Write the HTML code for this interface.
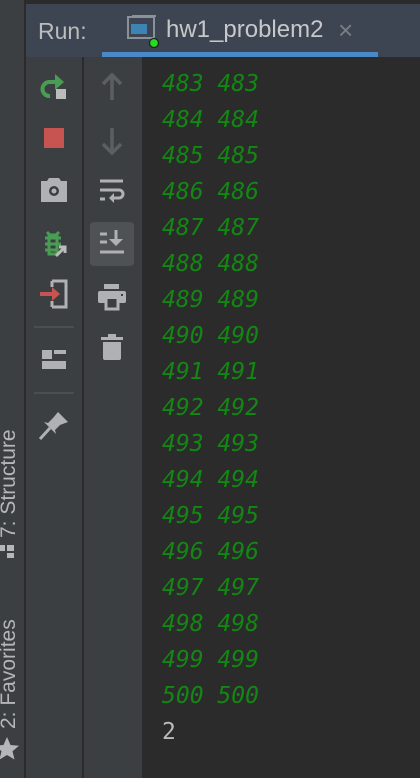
<!DOCTYPE html>
<html><head><style>
*{margin:0;padding:0;box-sizing:border-box}
body{width:420px;height:778px;overflow:hidden;background:#2b2b2b;position:relative;font-family:"Liberation Sans",sans-serif}
.a{position:absolute}
.out{position:absolute;left:162px;font-family:"DejaVu Sans Mono","Liberation Mono",monospace;font-style:italic;font-size:23px;color:#138713;line-height:36px;letter-spacing:0px}
.vt{position:absolute;color:#b4b6b8;font-size:21px;white-space:nowrap;transform-origin:0 0;transform:rotate(-90deg)}
</style></head><body>
<div class="a" style="left:0;top:0;width:24px;height:778px;background:#3c3f41"></div>
<div class="a" style="left:24px;top:0;width:2px;height:778px;background:#2b2b2b"></div>
<div class="a" style="left:26px;top:0;width:394px;height:4px;background:#2b2b2b"></div>
<div class="a" style="left:26px;top:4px;width:394px;height:53px;background:#3d4553"></div>
<div class="a" style="left:102px;top:52px;width:276px;height:5px;background:#4a88c7"></div>
<div class="a" style="left:38px;top:18px;font-size:23px;color:#bbbbbb">Run:</div>
<svg class="a" style="left:126px;top:14px" width="34" height="34"><rect x="2" y="3" width="26" height="21" fill="none" stroke="#8a9199" stroke-width="2"/><rect x="6" y="1" width="24" height="2" fill="#8a9199"/><rect x="5" y="10" width="16" height="10" fill="#3d84b4"/><circle cx="28" cy="29" r="4.5" fill="#22dd22" stroke="#222" stroke-width="1.3"/></svg>
<div class="a" style="left:166px;top:16px;font-size:24px;color:#c8c8c8">hw1_problem2</div>
<div class="a" style="left:338px;top:17px;font-size:26px;color:#7a7e83;line-height:26px">×</div>
<div class="a" style="left:26px;top:57px;width:56px;height:721px;background:#3c3f41"></div>
<div class="a" style="left:82px;top:57px;width:2px;height:721px;background:#2b2b2b"></div>
<div class="a" style="left:84px;top:57px;width:58px;height:721px;background:#3c3f41"></div>
<svg class="a" style="left:40px;top:70px" width="30" height="32"><path d="M16 12 H9 A7 7 0 0 0 10 26" fill="none" stroke="#499c54" stroke-width="4"/><path d="M15 4 L24 12 L15 20Z" fill="#499c54"/><rect x="16" y="19" width="10" height="10" fill="#bbbbbb"/></svg>
<div class="a" style="left:44px;top:128px;width:20px;height:20px;background:#c75450"></div>
<svg class="a" style="left:40px;top:178px" width="28" height="26"><path d="M9 0h10l2 3h6v21H1V3h6z" fill="#afb1b3"/><circle cx="14" cy="13" r="5" fill="#3c3f41"/><circle cx="14" cy="13" r="2.5" fill="#afb1b3"/></svg>
<svg class="a" style="left:41px;top:228px" width="30" height="30"><path d="M6 4l3 3h6l3-3M4 10h16M4 16h16M4 22h12M8 8h8v18H8z" stroke="#499c54" stroke-width="3" fill="none"/><path d="M15 28l9-9M18 19h6v6" stroke="#bbbbbb" stroke-width="3" fill="none"/></svg>
<svg class="a" style="left:38px;top:278px" width="32" height="32"><path d="M14 3h14v26H14M14 3v6M14 23v6" stroke="#afb1b3" stroke-width="3" fill="none"/><path d="M2 16h14" stroke="#c75450" stroke-width="4"/><path d="M14 9l8 7-8 7z" fill="#c75450"/></svg>
<div class="a" style="left:34px;top:326px;width:40px;height:2px;background:#4b4e50"></div>
<svg class="a" style="left:42px;top:350px" width="26" height="22"><rect x="0" y="0" width="10" height="9" fill="#afb1b3"/><rect x="12" y="0" width="12" height="4" fill="#afb1b3"/><rect x="0" y="11" width="24" height="8" fill="#afb1b3"/></svg>
<div class="a" style="left:34px;top:392px;width:40px;height:2px;background:#4b4e50"></div>
<svg class="a" style="left:38px;top:410px" width="32" height="32"><path d="M20 2l10 10-8 3-5 5 1 4-12-12 4 1 5-5z" fill="#afb1b3"/><path d="M12 18L2 29" stroke="#afb1b3" stroke-width="3"/></svg>
<svg class="a" style="left:100px;top:72px" width="24" height="30"><path d="M12 28V3M3 12l9-9 9 9" stroke="#5c5f61" stroke-width="3.5" fill="none"/></svg>
<svg class="a" style="left:100px;top:126px" width="24" height="30"><path d="M12 2v25M3 18l9 9 9-9" stroke="#5c5f61" stroke-width="3.5" fill="none"/></svg>
<svg class="a" style="left:99px;top:179px" width="26" height="28"><path d="M1 2h23M1 11h19a4 4 0 0 1 0 8h-8M1 20h5" stroke="#afb1b3" stroke-width="3" fill="none"/><path d="M15 14l-5 5 5 5z" fill="#afb1b3"/></svg>
<div class="a" style="left:90px;top:222px;width:44px;height:44px;background:#4e5254;border-radius:4px"></div>
<svg class="a" style="left:100px;top:230px" width="26" height="26"><path d="M0 4h7M0 12h7M0 22h24M16 0v12" stroke="#afb1b3" stroke-width="3" fill="none"/><path d="M9 9h14l-7 7z" fill="#afb1b3"/></svg>
<svg class="a" style="left:98px;top:284px" width="28" height="28"><rect x="6" y="0" width="15" height="5" fill="#afb1b3"/><rect x="0" y="7" width="28" height="12" rx="2" fill="#afb1b3"/><path d="M8 15v10h12V15" stroke="#afb1b3" stroke-width="3" fill="#3c3f41"/><rect x="23" y="10" width="2" height="2" fill="#3c3f41"/></svg>
<svg class="a" style="left:101px;top:333px" width="24" height="28"><rect x="0" y="4" width="22" height="3" fill="#afb1b3"/><rect x="7" y="1" width="8" height="3" fill="#afb1b3"/><path d="M2 9h18v16a2 2 0 0 1-2 2H4a2 2 0 0 1-2-2z" fill="#afb1b3"/></svg>
<div class="vt" style="left:-3px;top:538px">7: Structure</div>
<svg class="a" style="left:0;top:545px" width="16" height="22"><rect x="0" y="0" width="5" height="6" fill="#b4b6b8"/><rect x="7" y="0" width="7" height="6" fill="#b4b6b8"/><rect x="7" y="8" width="7" height="5" fill="#b4b6b8"/></svg>
<div class="vt" style="left:-3px;top:729px">2: Favorites</div>
<svg class="a" style="left:-6px;top:736px" width="26" height="26"><path d="M13 1l3.5 8 8.5.7-6.5 5.5 2 8.3L13 19l-7.5 4.5 2-8.3L1 9.7l8.5-.7z" fill="#b4b6b8"/></svg>
<div class="out" style="top:66px">483 483<br>484 484<br>485 485<br>486 486<br>487 487<br>488 488<br>489 489<br>490 490<br>491 491<br>492 492<br>493 493<br>494 494<br>495 495<br>496 496<br>497 497<br>498 498<br>499 499<br>500 500<br><span style="font-style:normal;color:#bbbbbb">2</span></div>
</body></html>
